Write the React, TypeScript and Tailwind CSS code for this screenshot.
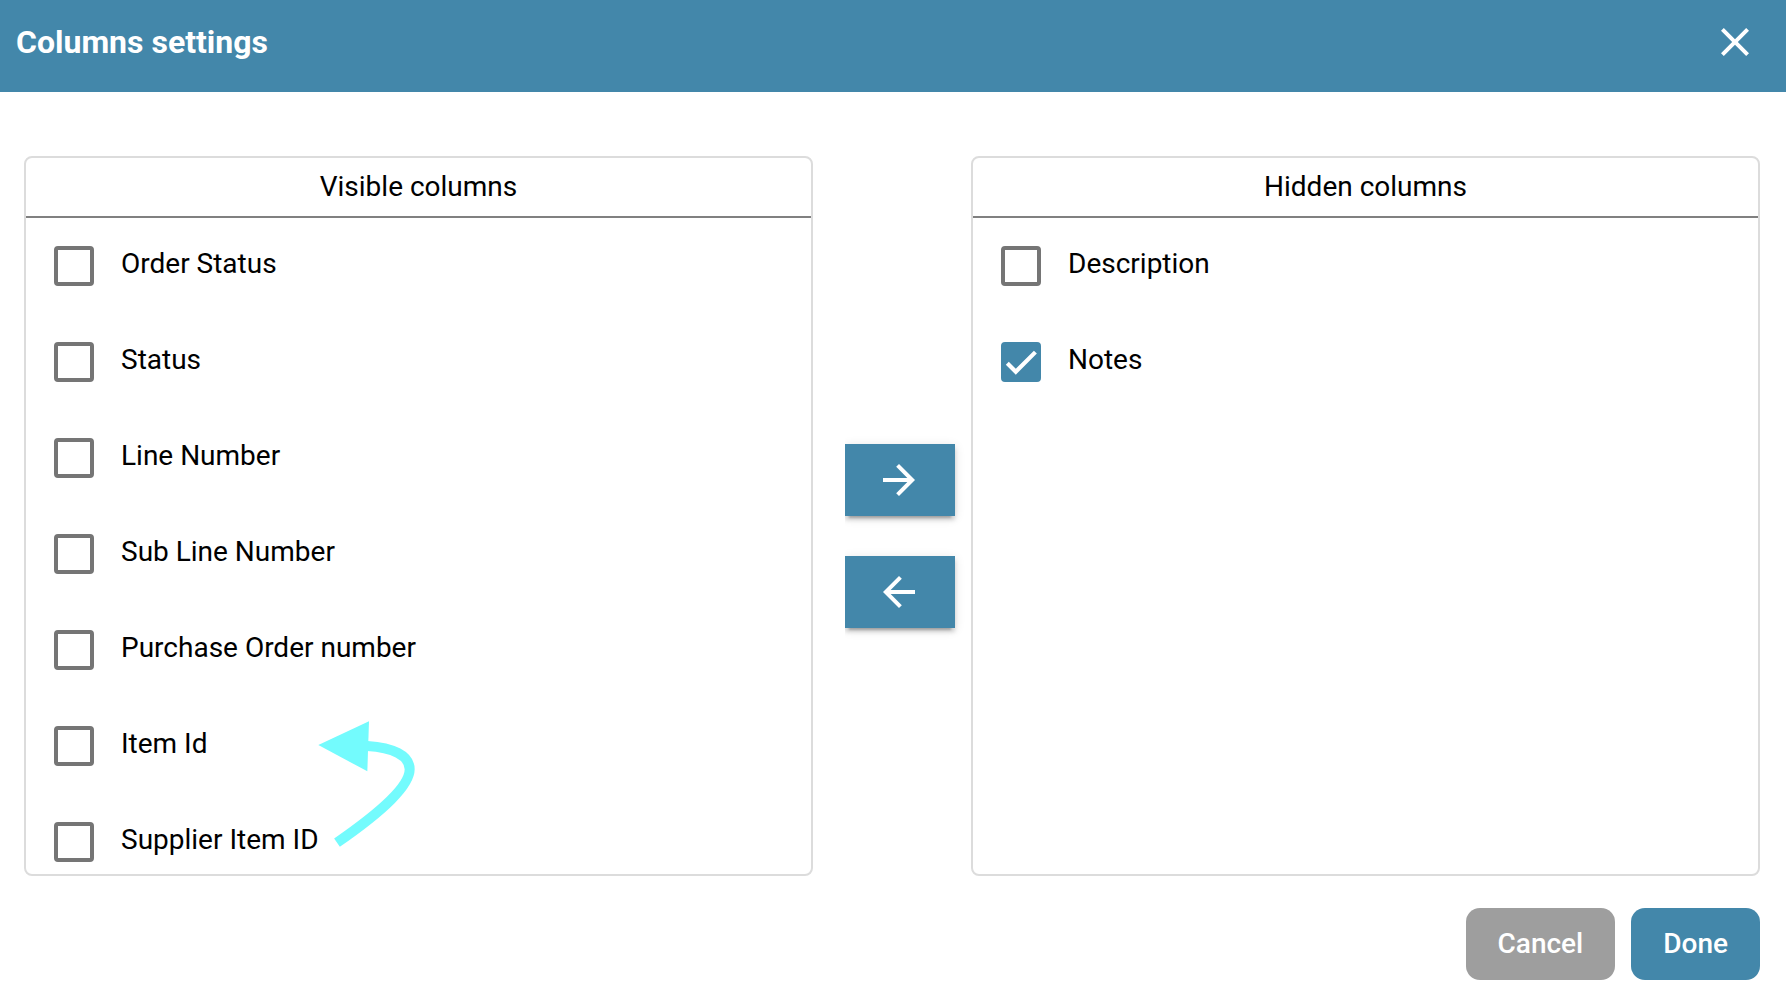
import { useState } from "react";
import { MdArrowBack, MdArrowForward, MdClose } from "react-icons/md";

type Column = { name: string; checked: boolean; arrow?: boolean };

const visible: Column[] = [
  { name: "Order Status", checked: false },
  { name: "Status", checked: false },
  { name: "Line Number", checked: false },
  { name: "Sub Line Number", checked: false },
  { name: "Purchase Order number", checked: false },
  { name: "Item Id", checked: false, arrow: true },
  { name: "Supplier Item ID", checked: false },
];

const hidden: Column[] = [
  { name: "Description", checked: false },
  { name: "Notes", checked: true },
];

/* Curved arrow that shows an item being dragged one row up. */
function MoveArrow() {
  return (
    <svg
      viewBox="0 0 450 540"
      className="pointer-events-none absolute top-0.5 left-[264px] z-10 h-[180px] w-[150px]"
      aria-hidden="true"
    >
      <path
        d="M141 428C285 328 359 255 359 208C359 166 308 143 232 138"
        fill="none"
        stroke="#73fbfd"
        strokeWidth="30"
      />
      <path d="M85 135L237 64L232 214Z" fill="#73fbfd" />
    </svg>
  );
}

function ColumnRow({ column }: { column: Column }) {
  const [checked, setChecked] = useState(column.checked);
  return (
    <li className="relative">
      <label className="flex h-24 items-center gap-[27px] pl-7">
        <span className="grid shrink-0">
          <input
            type="checkbox"
            checked={checked}
            onChange={(e) => setChecked(e.target.checked)}
            className="col-start-1 row-start-1 size-10 appearance-none rounded border-4 border-[#757575] checked:border-[#4387aa] checked:bg-[#4387aa]"
          />
          {checked && (
            <svg
              viewBox="0 0 24 24"
              className="pointer-events-none col-start-1 row-start-1 m-1 size-8"
              aria-hidden="true"
            >
              <path
                d="M1.73 12.91L8.1 19.28L22.79 4.59"
                fill="none"
                stroke="#fff"
                strokeWidth="3.12"
              />
            </svg>
          )}
        </span>
        <span className="pb-1">{column.name}</span>
      </label>
      {column.arrow && <MoveArrow />}
    </li>
  );
}

function Panel({ title, columns }: { title: string; columns: Column[] }) {
  return (
    <section className="flex min-h-0 min-w-0 flex-1 flex-col rounded-lg border-2 border-[#dcdcdc]">
      <h2 className="flex h-[60px] shrink-0 items-center justify-center border-b-2 border-[#808080]">
        {title}
      </h2>
      <ul className="min-h-0 flex-1 overflow-y-auto [scrollbar-width:none]">
        {columns.map((c) => (
          <ColumnRow key={c.name} column={c} />
        ))}
      </ul>
    </section>
  );
}

const moveButton =
  "flex h-[72px] w-[110px] items-center justify-center bg-[#4387aa] pr-0.5 text-white shadow-[0_6px_2px_-4px_rgba(0,0,0,0.2),0_4px_4px_rgba(0,0,0,0.14),0_2px_10px_rgba(0,0,0,0.12)]";

export default function App() {
  return (
    <div className="flex h-screen flex-col bg-white font-[Roboto,sans-serif] text-[28px] leading-9 text-black">
      <header className="flex shrink-0 items-center justify-between bg-[#4387aa] pt-[18px] pr-[27px] pb-[26px] pl-4 text-white">
        <h1 className="text-[32px] leading-10 font-bold">Columns settings</h1>
        <button type="button" aria-label="Close">
          <MdClose className="size-12" />
        </button>
      </header>
      <main className="flex min-h-0 flex-1 pt-16 pr-[26px] pl-6">
        <Panel title="Visible columns" columns={visible} />
        <div className="ml-8 flex flex-col justify-center gap-10 overflow-hidden pt-10 pr-4">
          <button type="button" aria-label="Hide selected columns" className={moveButton}>
            <MdArrowForward className="size-12" />
          </button>
          <button type="button" aria-label="Show selected columns" className={moveButton}>
            <MdArrowBack className="size-12" />
          </button>
        </div>
        <Panel title="Hidden columns" columns={hidden} />
      </main>
      <footer className="flex shrink-0 justify-end gap-4 pt-8 pr-[26px] pb-7 font-medium text-white">
        <button type="button" className="h-[72px] rounded-[14px] bg-[#9e9e9e] px-8">
          Cancel
        </button>
        <button type="button" className="h-[72px] rounded-[14px] bg-[#4387aa] px-8">
          Done
        </button>
      </footer>
    </div>
  );
}
